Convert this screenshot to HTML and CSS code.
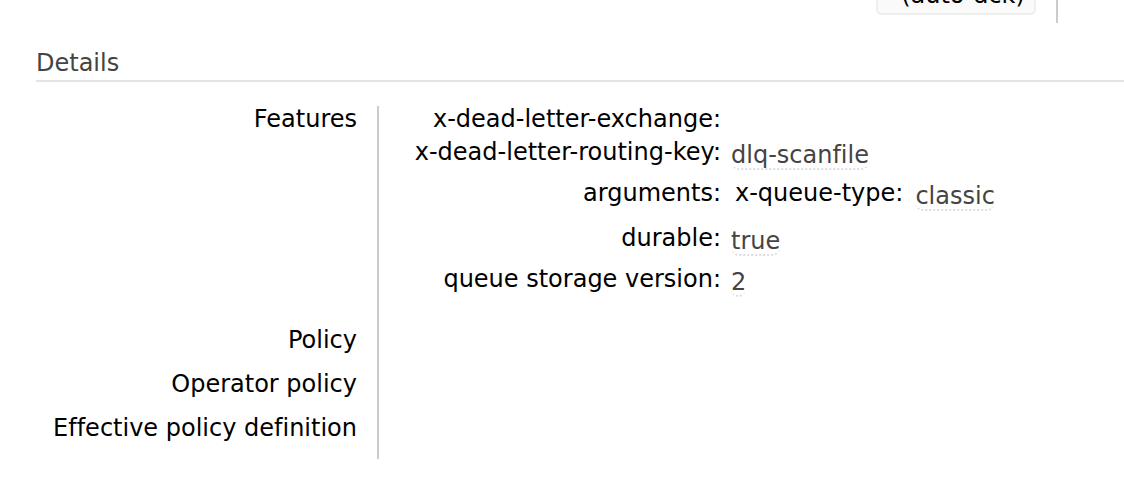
FILE: index.html
```html
<!DOCTYPE html>
<html lang="en">
<head>
<meta charset="utf-8">
<title>Queue details</title>
<link rel="stylesheet" href="styles.css">
</head>
<body>
<div class="consumers">
  <div class="ack-cell"><span class="ack-box">(auto-ack)</span></div>
</div>
<main class="section">
  <h2 class="heading">Details</h2>
  <table class="facts">
    <tr class="features">
      <th scope="row">Features</th>
      <td>
        <table class="args">
          <tr class="plain"><th scope="row">x-dead-letter-exchange:</th><td></td></tr>
          <tr><th scope="row">x-dead-letter-routing-key:</th><td><abbr>dlq-scanfile</abbr></td></tr>
          <tr class="arguments"><th scope="row">arguments:</th><td><table class="nested"><tr><th scope="row">x-queue-type:</th><td><abbr>classic</abbr></td></tr></table></td></tr>
          <tr><th scope="row">durable:</th><td><abbr>true</abbr></td></tr>
          <tr><th scope="row">queue storage version:</th><td><abbr>2</abbr></td></tr>
        </table>
      </td>
    </tr>
    <tr><th scope="row">Policy</th><td></td></tr>
    <tr><th scope="row">Operator policy</th><td></td></tr>
    <tr><th scope="row">Effective policy definition</th><td></td></tr>
  </table>
</main>
</body>
</html>
```
FILE: styles.css
```css
body {
  margin: 0;
  background: #fff;
  color: #000;
  font: 24px/26px "DejaVu Sans", Verdana, sans-serif;
  font-variant-ligatures: none;
}
.consumers {
  display: flex;
  justify-content: flex-end;
  align-items: flex-end;
  height: 23px;
  overflow: hidden;
  padding-right: 66px;
}
.ack-cell {
  padding: 0 20px 8px 0;
  border-right: 2px solid #ccc;
}
.ack-box {
  display: block;
  box-sizing: border-box;
  width: 160px;
  padding: 4px 0 5px 14px;
  border: 2px solid #eee;
  border-radius: 6px;
  background: #fafafa;
  text-align: center;
}
.section { padding-left: 36px; }
.heading {
  margin: 0;
  padding: 27px 0 4px;
  border-bottom: 2px solid #e4e4e4;
  color: #444;
  font-size: 24px;
  font-weight: normal;
}
table { border-spacing: 0; }
th, td { padding: 0; vertical-align: top; }
th { font-weight: normal; text-align: right; white-space: nowrap; }
.facts { margin-top: 24px; }
.facts > tbody > tr > th { min-width: 321px; padding-right: 20px; height: 44px; }
.facts > tbody > .features > th { height: 221px; }
.facts > tbody > tr > td { border-left: 2px solid #ccc; padding-left: 24px; }
.args > tbody > tr > th { min-width: 318px; height: 41px; }
.args > tbody > .plain > th { height: 33px; }
.args > tbody > .arguments > th { height: 45px; }
.args td { padding: 3px 0 0 10px; }
.args > tbody > .arguments > td { padding: 0 0 0 14px; }
.nested td { padding-left: 12px; }
abbr {
  display: inline-block;
  border-bottom: 2px dotted #ddd;
  border-radius: 8px;
  color: #444;
}
```
